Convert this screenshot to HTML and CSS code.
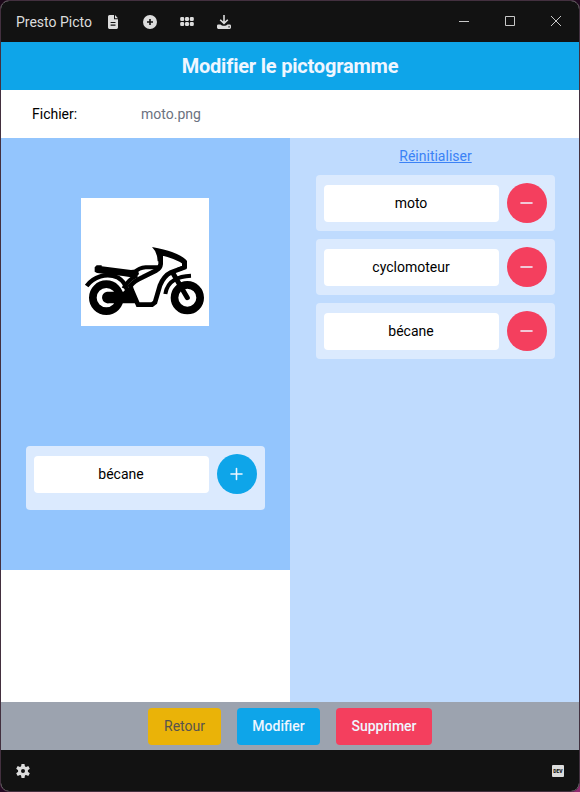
FILE: index.html
```html
<!DOCTYPE html>
<html lang="fr">
<head>
<meta charset="utf-8">
<title>Presto Picto</title>
<link rel="stylesheet" href="styles.css">
</head>
<body>
<div class="window">
  <header class="titlebar">
    <span class="app-name">Presto Picto</span>
    <nav class="tools">
      <svg class="icon" viewBox="0 0 14 14"><path fill="currentColor" fill-rule="evenodd" d="M3.5 0H8v4.2h4V12.6A1.4 1.4 0 0 1 10.6 14H3.4A1.4 1.4 0 0 1 2 12.6V1.5A1.5 1.5 0 0 1 3.5 0ZM9 0l3 3.3H9ZM4.6 7v1h4.9V7Zm0 2.6v1.2h4.9V9.6Z"/></svg>
      <svg class="icon" viewBox="0 0 14 14"><path fill="currentColor" fill-rule="evenodd" d="M7 0a7 7 0 1 1 0 14A7 7 0 0 1 7 0ZM6.2 4v2.2H4v1.6h2.2V10h1.6V7.8H10V6.2H7.8V4Z"/></svg>
      <svg class="icon" viewBox="0 0 14 14"><g fill="currentColor"><rect x=".2" y="2.1" width="4" height="4" rx="1.3"/><rect x="5" y="2.1" width="4" height="4" rx="1.3"/><rect x="9.8" y="2.1" width="4" height="4" rx="1.3"/><rect x=".2" y="7.1" width="4" height="4" rx="1.3"/><rect x="5" y="7.1" width="4" height="4" rx="1.3"/><rect x="9.8" y="7.1" width="4" height="4" rx="1.3"/></g></svg>
      <svg class="icon" viewBox="0 0 14 14"><path fill="none" stroke="currentColor" stroke-width="1.6" d="M7 0v8M3.2 4.7 7 8.4l3.8-3.7"/><path fill="currentColor" fill-rule="evenodd" d="M1.4 9.4h2.1C4.7 11.2 9.3 11.2 10.5 9.4h2.1A1.4 1.4 0 0 1 14 10.8v1.8a1.4 1.4 0 0 1-1.4 1.4H1.4A1.4 1.4 0 0 1 0 12.6v-1.8A1.4 1.4 0 0 1 1.4 9.4ZM11.4 11.2v1.3h1.3v-1.3Z"/></svg>
    </nav>
    <div class="controls">
      <svg viewBox="0 0 46 41"><path d="M18 20.5h10"/></svg>
      <svg viewBox="0 0 46 41"><path d="M18.5 15.5h9v9h-9z"/></svg>
      <svg viewBox="0 0 46 41"><path d="m18 15 10 10M28 15 18 25"/></svg>
    </div>
  </header>

  <h1 class="heading">Modifier le pictogramme</h1>

  <div class="file">
    <span class="file-label">Fichier:</span>
    <span class="file-name">moto.png</span>
  </div>

  <main class="content">
    <section class="editor">
      <svg class="picture" viewBox="0 -126 384 384" role="img" aria-label="moto">
        <g fill="none" stroke="#000">
          <circle cx="76" cy="173" r="40.5" stroke-width="23"/>
          <circle cx="319" cy="173" r="38.5" stroke-width="23"/>
          <path stroke-width="13" d="M17 138C36 111 77 96 111 113C126 122 134 134 138 150"/>
          <path stroke-width="12" d="M253 162C256 142 265 128 281 119C296 110 311 108 330 107"/>
          <path stroke-width="15" stroke-linecap="round" d="M276 100 319 173"/>
          <path stroke-width="14" d="M239 38V72Q238 84 226 91L184 112Q160 122 148 138L152 150 171 194H213L222 187 237 136Q249 107 270 97L310 82V67Q292 51 239 38"/>
          <path stroke-width="12" d="M160 98Q174 83 194 82H235"/>
          <path stroke-width="13" d="M128 145Q140 120 168 106"/>
        </g>
        <path d="M47 76H62V79L150 90 170 88 174 102 164 114 126 108 48 99 41 95V82ZM213 21Q252 29 273 36 308 49 318 63V84L296 94 288 84 304 78V68Q280 49 246 45L240 64H230Q229 36 213 21ZM78 155H127L139 143 153 141 172 190H84A17.500 17.500 0 0 1 78 155Z"/>
      </svg>
      <div class="card card-add">
        <input class="field" type="text" value="bécane">
        <button class="round round-add"><svg viewBox="0 0 14 14"><path d="M6.500 1.500v11M1 7h11"/></svg></button>
      </div>
    </section>

    <section class="words">
      <a class="reset">Réinitialiser</a>
      <div class="card">
        <input class="field" type="text" value="moto">
        <button class="round round-remove"><svg viewBox="0 0 14 14"><path d="M1 7h11"/></svg></button>
      </div>
      <div class="card">
        <input class="field" type="text" value="cyclomoteur">
        <button class="round round-remove"><svg viewBox="0 0 14 14"><path d="M1 7h11"/></svg></button>
      </div>
      <div class="card">
        <input class="field" type="text" value="bécane">
        <button class="round round-remove"><svg viewBox="0 0 14 14"><path d="M1 7h11"/></svg></button>
      </div>
    </section>
  </main>

  <div class="actions">
    <button class="action action-back">Retour</button>
    <button class="action action-edit">Modifier</button>
    <button class="action action-delete">Supprimer</button>
  </div>

  <footer class="statusbar">
    <svg class="icon" viewBox="0 0 14 14"><path fill="none" stroke="currentColor" stroke-width="3" d="M7 3.5a3.5 3.5 0 1 0 0 7a3.5 3.5 0 0 0 0-7Z"/><path fill="currentColor" d="M5.5 0h3l.5 3H5ZM5.5 14h3l.5-3H5ZM.2 4.7l1.5-2.6L4.5 3.2 2.5 6.6ZM13.8 4.7l-1.5-2.6L9.5 3.2l2 3.4ZM.2 9.3l1.5 2.6 2.8-1.1-2-3.4ZM13.8 9.3l-1.5 2.6-2.8-1.1 2-3.4Z"/></svg>
    <span class="dev">DEV</span>
  </footer>
</div>
</body>
</html>
```
FILE: styles.css
```css
* { box-sizing: border-box; }

body {
  margin: 0;
  background: linear-gradient(135deg, #1b0718 0%, #280b27 80%, #922970 100%);
  font: 14px/20px Roboto, sans-serif;
  color: #000;
}

button, input { font: inherit; border: 0; margin: 0; }

.window {
  display: flex;
  flex-direction: column;
  width: 580px;
  height: 792px;
  border: 1px solid #43303f;
  border-radius: 9px;
  overflow: hidden;
  background: #fff;
}

.titlebar, .statusbar {
  display: flex;
  align-items: center;
  flex: none;
  height: 41px;
  background: #121212;
  color: #dcdcdc;
}

.titlebar { padding-left: 15px; }
.app-name { width: 76px; white-space: nowrap; }
.tools { display: flex; gap: 23px; margin-left: 14px; }
.icon { display: block; width: 14px; height: 14px; }
.controls { display: flex; margin-left: auto; }
.controls svg { width: 46px; height: 41px; fill: none; stroke: #c8c8c8; stroke-width: 1; }

.heading {
  display: flex;
  align-items: center;
  justify-content: center;
  flex: none;
  height: 48px;
  margin: 0;
  background: #0ea5e9;
  color: #eff6ff;
  font-size: 20px;
  font-weight: 700;
  letter-spacing: -0.2px;
}

.file { display: flex; align-items: center; flex: none; height: 48px; padding-left: 31px; }
.file-label { width: 109px; }
.file-name { color: #6b7280; }

.content { display: grid; grid-template-columns: 1fr 1fr; flex: 1; }

.editor {
  display: flex;
  flex-direction: column;
  align-items: flex-start;
  justify-content: space-between;
  height: 432px;
  padding: 60px 25px;
  background: #93c5fd;
}

.picture { width: 128px; height: 128px; margin-left: 55px; background: #fff; }

.words {
  display: flex;
  flex-direction: column;
  align-items: center;
  gap: 8px;
  padding: 8px 24px 8px 26px;
  background: #bfdbfe;
}

.reset { margin-bottom: 1px; color: #3b82f6; text-decoration: underline; }

.card {
  display: flex;
  align-items: flex-start;
  gap: 8px;
  width: 239px;
  height: 56px;
  padding: 8px;
  border-radius: 4px;
  background: #dbeafe;
}

.card-add { height: 64px; }

.field {
  width: 175px;
  height: 37px;
  margin-top: 2px;
  padding: 0 9px 2px 8px;
  border-radius: 4px;
  background: #fff;
  color: #000;
  text-align: center;
}

.round {
  display: flex;
  align-items: center;
  justify-content: center;
  width: 40px;
  height: 40px;
  padding: 0;
  border-radius: 50%;
}

.round svg { width: 14px; height: 14px; fill: none; stroke: #eff6ff; stroke-width: 1.6; stroke-linecap: round; }
.round-add, .action-edit { background: #0ea5e9; }
.round-remove, .action-delete { background: #f43f5e; }

.actions {
  display: flex;
  justify-content: center;
  gap: 16px;
  flex: none;
  height: 48px;
  padding-top: 6px;
  background: #9ca3af;
}

.action {
  height: 37px;
  padding: 0 0 2px;
  border-radius: 4px;
  color: #eff6ff;
  font-weight: 500;
}

.action-back { width: 73px; background: #eab308; color: #57534e; font-weight: 400; }
.action-edit { width: 83px; }
.action-delete { width: 96px; }

.statusbar { justify-content: space-between; padding: 0 15px; height: 41px; }

.dev {
  width: 12px;
  height: 12px;
  border-radius: 1px;
  background: #dcdcdc;
  color: #121212;
  font-size: 5px;
  font-weight: 900;
  line-height: 12px;
  text-align: center;
}
```
